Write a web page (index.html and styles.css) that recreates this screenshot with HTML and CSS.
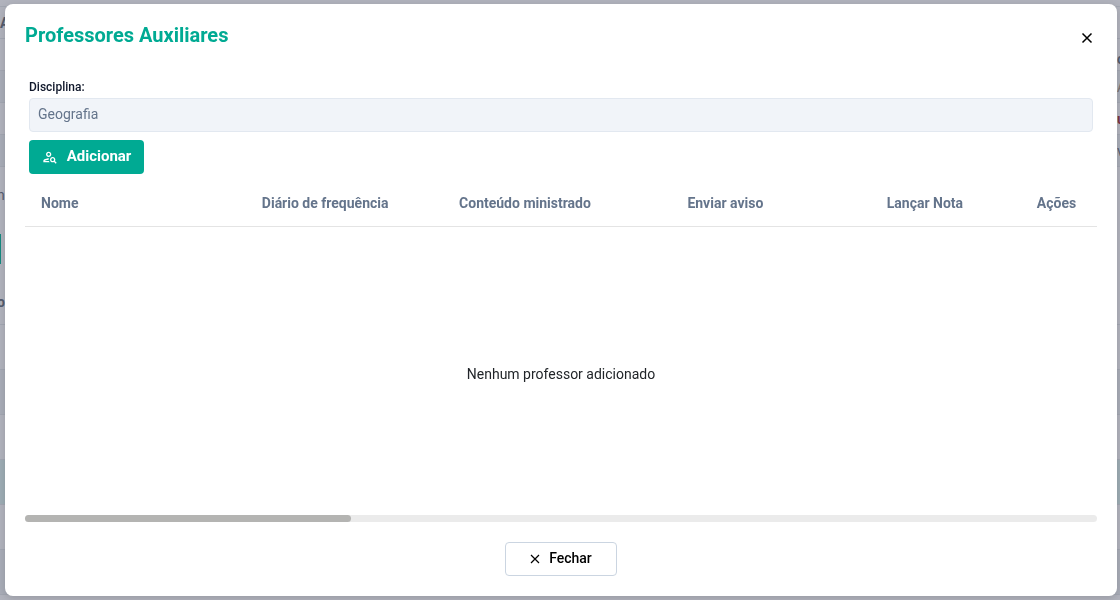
FILE: index.html
```html
<!DOCTYPE html>
<html lang="pt-BR">
<head>
    <meta charset="UTF-8">
    <meta name="viewport" content="width=device-width, initial-scale=1">
    <title>Professores Auxiliares</title>
    <link rel="stylesheet" href="styles.css">
</head>
<body>
    <!-- página atrás do modal -->
    <div class="page" aria-hidden="true">
        <div class="page-row page-row-top"></div>
        <div class="page-row page-row-sm"><b>A</b></div>
        <div class="page-row page-row-sm page-row-up"><span></span><b>o</b></div>
        <div class="page-row page-row-sm page-row-alt"><span></span><span class="page-link">A</span></div>
        <div class="page-row page-row-sm"><span></span><b class="page-alert">u</b></div>
        <div class="page-row page-row-sm page-row-alt"><span></span><span>v</span></div>
        <div class="page-filter">
            <span>n</span>
            <div class="page-button"></div>
            <b>o</b>
        </div>
        <div class="page-row"></div>
        <div class="page-row page-row-alt"></div>
        <div class="page-row"></div>
        <div class="page-row page-row-active"></div>
        <div class="page-row"></div>
        <div class="page-row page-row-alt"></div>
    </div>

    <div class="dialog-mask">
        <div class="dialog" role="dialog" aria-modal="true" aria-labelledby="dialog-title">
            <div class="dialog-header">
                <h1 id="dialog-title">Professores Auxiliares</h1>
                <button type="button" class="dialog-close" aria-label="Fechar janela">
                    <svg width="12" height="12" viewBox="0 0 12 12"><path d="M1.500 1.500l9 9M10.500 1.500l-9 9" stroke="currentColor" stroke-width="1.500" fill="none"/></svg>
                </button>
            </div>

            <div class="dialog-content">
                <div class="form">
                    <label for="disciplina">Disciplina:</label>
                    <input type="text" id="disciplina" value="Geografia" disabled>
                    <button type="button" class="btn btn-primary">
                        <svg width="16" height="16" viewBox="0 0 24 24" fill="currentColor"><path d="M10 12c2.210 0 4-1.790 4-4s-1.790-4-4-4-4 1.790-4 4 1.790 4 4 4zm0-6c1.100 0 2 .9 2 2s-.9 2-2 2-2-.9-2-2 .9-2 2-2zM4 18c.22-.72 3.310-2 6-2 0-.7.130-1.370.350-1.990C7.620 13.910 2 15.270 2 18v2h9.540c-.52-.58-.93-1.250-1.190-2H4zM19.430 18.020c.36-.59.570-1.280.570-2.020 0-2.210-1.790-4-4-4s-4 1.790-4 4 1.790 4 4 4c.74 0 1.430-.22 2.020-.57L20.590 22 22 20.590l-2.570-2.570zM16 18c-1.100 0-2-.9-2-2s.9-2 2-2 2 .9 2 2-.9 2-2 2z"/></svg>
                        Adicionar
                    </button>
                </div>

                <table class="table">
                    <thead>
                        <tr>
                            <th class="col-nome">Nome</th>
                            <th class="col-diario">Diário de frequência</th>
                            <th class="col-conteudo">Conteúdo ministrado</th>
                            <th class="col-aviso">Enviar aviso</th>
                            <th class="col-nota">Lançar Nota</th>
                            <th class="col-acoes">Ações</th>
                        </tr>
                    </thead>
                    <tbody>
                        <tr>
                            <td colspan="6" class="empty">Nenhum professor adicionado</td>
                        </tr>
                    </tbody>
                </table>
                <div class="scrollbar"><div class="scrollbar-thumb"></div></div>
            </div>

            <div class="dialog-footer">
                <button type="button" class="btn btn-outline">
                    <svg width="10" height="10" viewBox="0 0 10 10"><path d="M1 1l8 8M9 1l-8 8" stroke="currentColor" stroke-width="1.200" fill="none"/></svg>
                    Fechar
                </button>
            </div>
        </div>
    </div>
</body>
</html>
```

FILE: styles.css
```css
* {
    box-sizing: border-box;
}

body {
    margin: 0;
    height: 100vh;
    overflow: hidden;
    font-family: Roboto, sans-serif;
    font-size: 14px;
    color: #212529;
    background-color: #b1b3bd;
}

/* página de fundo */
.page {
    height: 100vh;
    overflow: hidden;
    color: #555c6e;
}

.page-row {
    display: flex;
    align-items: center;
    justify-content: space-between;
    height: 45px;
    border-bottom: 1px solid #a3a7b2;
    overflow: hidden;
}

.page-row b,
.page-row span {
    flex: none;
    width: 3px;
    white-space: nowrap;
}

.page-row-top {
    height: 7px;
}

.page-row-sm {
    height: 32px;
}

.page-row-up {
    align-items: flex-end;
    padding-bottom: 3px;
}

.page-row-alt {
    background-color: #a9adb8;
}

.page-row-active {
    background-color: #9eadb5;
}

.page-link {
    color: #7a7270;
}

.page-alert {
    color: #7c3341;
}

.page-filter {
    display: flex;
    flex-direction: column;
    justify-content: space-between;
    height: 158px;
    padding: 20px 0 14px;
    border-bottom: 1px solid #a3a7b2;
}

.page-filter > span,
.page-filter > b {
    margin-left: -3px;
}

.page-button {
    width: 1px;
    height: 30px;
    background-color: #15897f;
}

/* modal */
.dialog-mask {
    position: fixed;
    inset: 0;
    display: flex;
    padding: 4px 3px 4px 5px;
}

.dialog {
    flex: 1;
    display: flex;
    flex-direction: column;
    padding: 20px;
    background-color: #fff;
    border-radius: 8px;
    box-shadow: 0 2px 8px rgba(0, 0, 0, 0.15);
}

.dialog-header {
    display: flex;
    justify-content: space-between;
    align-items: flex-start;
    height: 52px;
}

h1 {
    margin: 0;
    font-size: 20px;
    font-weight: 700;
    line-height: 22px;
    color: #00aa93;
}

.dialog-close {
    display: flex;
    align-items: center;
    justify-content: center;
    width: 20px;
    height: 28px;
    padding: 0;
    border: none;
    background: none;
    color: #000;
    cursor: pointer;
}

.dialog-content {
    flex: 1;
    display: flex;
    flex-direction: column;
}

.form {
    display: flex;
    flex-direction: column;
    align-items: flex-start;
    padding: 4px 4px 3px;
}

label {
    margin-bottom: 4px;
    font-size: 12px;
    font-weight: 500;
    line-height: 14px;
    color: #0f172a;
}

input {
    width: 100%;
    height: 34px;
    margin-bottom: 8px;
    padding: 0 8px 2px;
    border: 1px solid #e2e8f0;
    border-radius: 4px;
    background-color: #f1f4f9;
    font-family: inherit;
    font-size: 14px;
    color: #64748b;
}

.btn {
    display: flex;
    align-items: center;
    justify-content: center;
    gap: 9px;
    height: 34px;
    border-radius: 4px;
    font-family: inherit;
    font-size: 14px;
    line-height: 16px;
    padding: 0 0 2px;
    cursor: pointer;
}

.btn svg {
    margin-top: 2px;
}

.btn-primary {
    min-width: 115px;
    border: none;
    background-color: #00aa93;
    font-size: 15px;
    font-weight: 700;
    color: #fff;
}

.btn-outline {
    min-width: 112px;
    border: 1px solid #cbd5e1;
    background-color: #fff;
    font-weight: 500;
    color: #000;
}

.table {
    flex: 1;
    width: 100%;
    border-collapse: collapse;
    table-layout: fixed;
}

th {
    height: 49px;
    padding: 4px 16px 0;
    border-bottom: 1px solid #e4e4e4;
    text-align: left;
    font-weight: 700;
    color: #64748b;
    white-space: nowrap;
}

.col-nome { width: 20.6%; }
.col-diario { width: 18.4%; }
.col-conteudo { width: 21.3%; }
.col-aviso { width: 18.6%; }
.col-nota { width: 14%; }
.col-acoes { width: 7.1%; }

.empty {
    padding: 6px 0 0;
    text-align: center;
    vertical-align: middle;
}

.scrollbar {
    height: 7px;
    border-radius: 4px;
    background-color: #ebebeb;
}

.scrollbar-thumb {
    width: 30.4%;
    height: 100%;
    border-radius: 4px;
    background-color: #b4b4b2;
}

.dialog-footer {
    display: flex;
    justify-content: center;
    padding-top: 20px;
}
```
